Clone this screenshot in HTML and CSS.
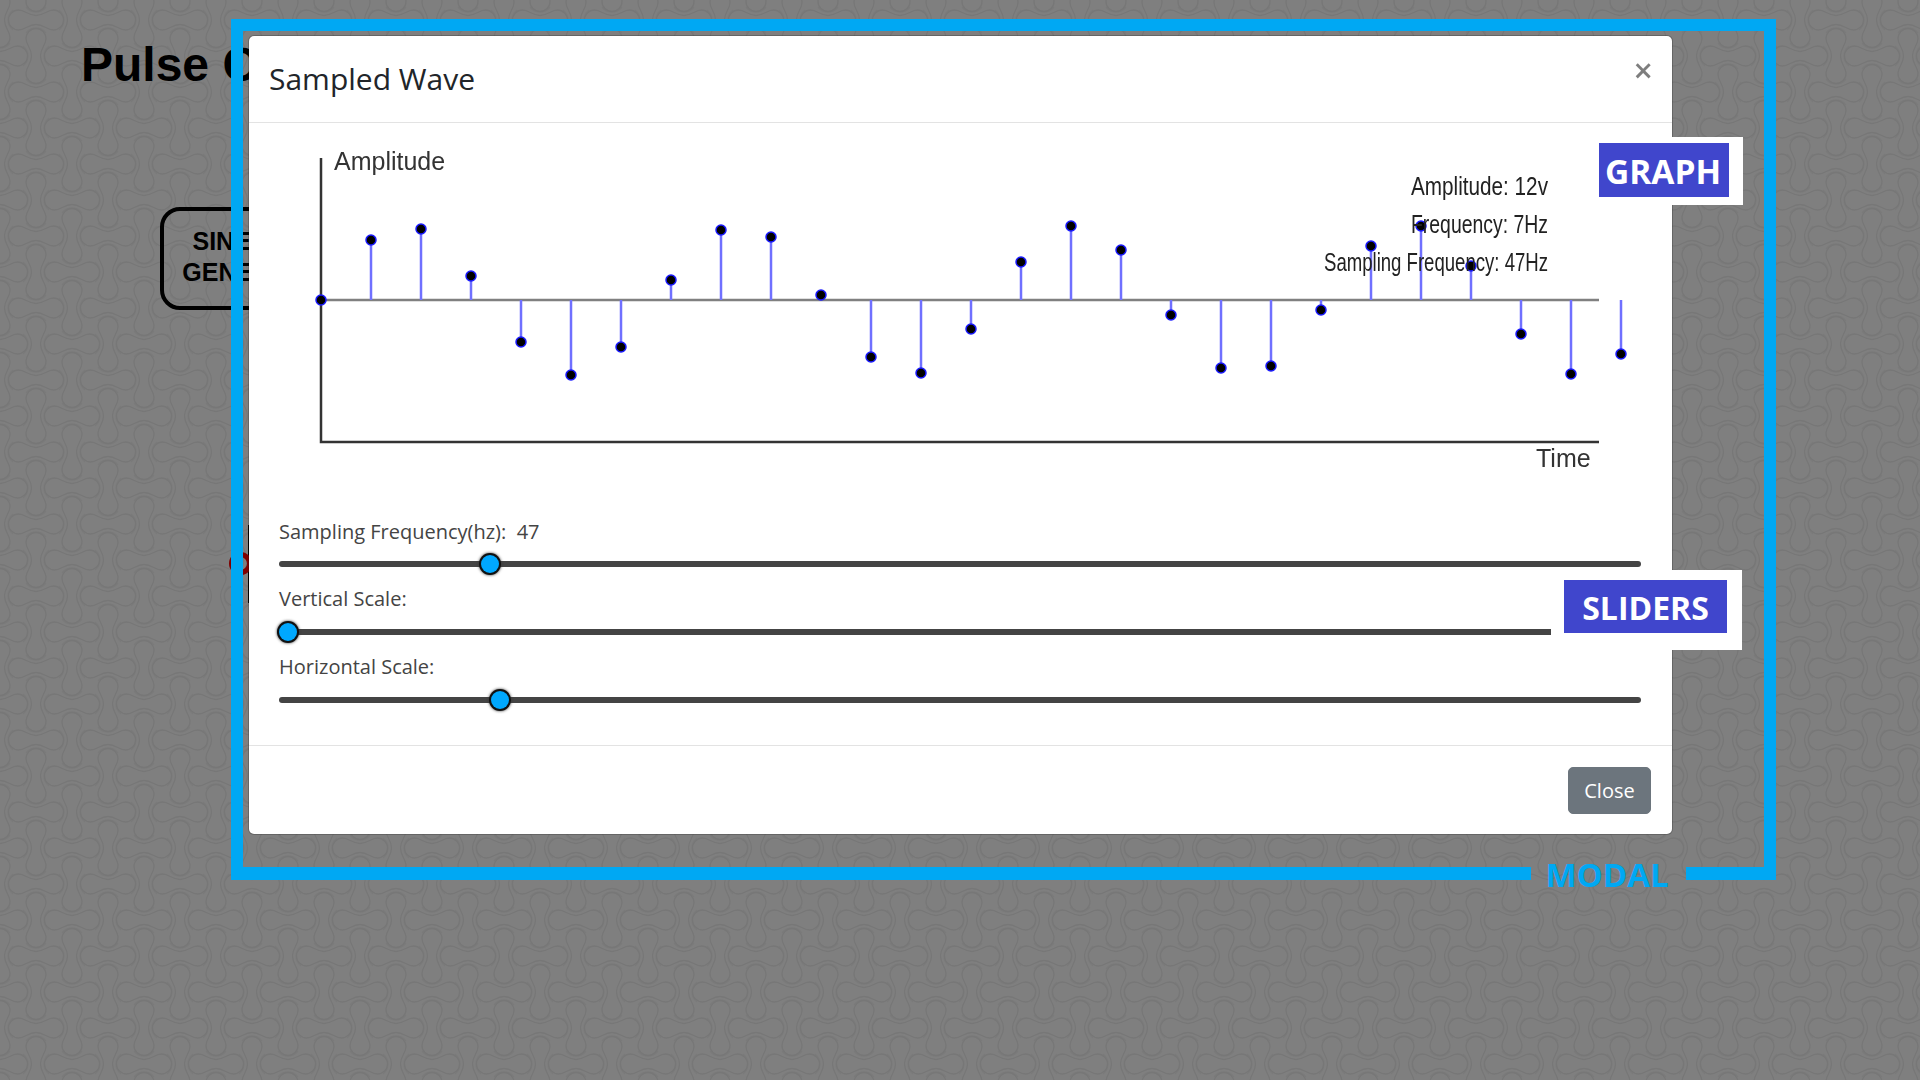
FILE: index.html
```html
<!DOCTYPE html>
<html lang="en">
<head>
    <meta charset="UTF-8"/>
    <title>Sampled Wave</title>
    <link rel="stylesheet" href="styles.css">
</head>
<body>
<svg class="wallpaper" aria-hidden="true">
    <defs>
        <path id="bone" d="M-17.5 -10C-11 -10 -8 -4.5 0 -4.5C8 -4.5 11 -10 17.5 -10A10 10 0 0 1 17.5 10C11 10 8 4.5 0 4.5C-8 4.5 -11 10 -17.5 10A10 10 0 0 1 -17.5 -10Z"/>
        <path id="rim" stroke-opacity="0.6" d="M-10 -13A12.5 12.5 0 0 0 10 -13M-10 13A12.5 12.5 0 0 1 10 13"/>
        <g id="knot">
            <use href="#bone"/>
            <use href="#rim"/>
        </g>
        <pattern id="weave" width="72" height="72" patternUnits="userSpaceOnUse">
            <g fill="none" stroke="#eeeeee" stroke-width="1.3">
                <use href="#knot" transform="translate(0 56)"/>
                <use href="#knot" transform="translate(72 56)"/>
                <use href="#knot" transform="translate(36 20)"/>
                <use href="#knot" transform="translate(36 56) rotate(90)"/>
                <use href="#knot" transform="translate(0 20) rotate(90)"/>
                <use href="#knot" transform="translate(72 20) rotate(90)"/>
                <use href="#knot" transform="translate(36 92)"/>
                <use href="#knot" transform="translate(0 92) rotate(90)"/>
                <use href="#knot" transform="translate(72 92) rotate(90)"/>
                <use href="#knot" transform="translate(0 -16)"/>
                <use href="#knot" transform="translate(72 -16)"/>
                <use href="#knot" transform="translate(36 -16) rotate(90)"/>
            </g>
        </pattern>
    </defs>
    <rect width="100%" height="100%" fill="url(#weave)"/>
</svg>

<main class="page">
    <h1>Pulse Code Modulation</h1>
    <div class="block block-sine">SINE WAVE<br/>GENERATOR</div>
</main>
<div class="block-multiplier"></div>
<div class="mixer"></div>

<div class="backdrop"></div>

<section class="modal">
    <header class="modal-header">
        <h5 class="modal-title">Sampled Wave</h5>
        <button class="close" type="button">&times;</button>
    </header>
    <div class="modal-body">
        <svg class="graph" viewBox="279 140 1363 340">
            <path class="mid" d="M321 300H1599"/>
            <path class="axis" d="M321 158V442H1599"/>
            <path class="stems" d="M371 300V240M421 300V229M471 300V276M521 300V342M571 300V375M621 300V347M671 300V280M721 300V230M771 300V237M821 300V295M871 300V357M921 300V373M971 300V329M1021 300V262M1071 300V226M1121 300V250M1171 300V315M1221 300V368M1271 300V366M1321 300V310M1371 300V246M1421 300V226M1471 300V266M1521 300V334M1571 300V374M1621 300V354"/>
            <g class="dots">
                <circle cx="321" cy="300" r="5"/>
                <circle cx="371" cy="240" r="5"/>
                <circle cx="421" cy="229" r="5"/>
                <circle cx="471" cy="276" r="5"/>
                <circle cx="521" cy="342" r="5"/>
                <circle cx="571" cy="375" r="5"/>
                <circle cx="621" cy="347" r="5"/>
                <circle cx="671" cy="280" r="5"/>
                <circle cx="721" cy="230" r="5"/>
                <circle cx="771" cy="237" r="5"/>
                <circle cx="821" cy="295" r="5"/>
                <circle cx="871" cy="357" r="5"/>
                <circle cx="921" cy="373" r="5"/>
                <circle cx="971" cy="329" r="5"/>
                <circle cx="1021" cy="262" r="5"/>
                <circle cx="1071" cy="226" r="5"/>
                <circle cx="1121" cy="250" r="5"/>
                <circle cx="1171" cy="315" r="5"/>
                <circle cx="1221" cy="368" r="5"/>
                <circle cx="1271" cy="366" r="5"/>
                <circle cx="1321" cy="310" r="5"/>
                <circle cx="1371" cy="246" r="5"/>
                <circle cx="1421" cy="226" r="5"/>
                <circle cx="1471" cy="266" r="5"/>
                <circle cx="1521" cy="334" r="5"/>
                <circle cx="1571" cy="374" r="5"/>
                <circle cx="1621" cy="354" r="5"/>
            </g>
            <text class="axis-label" x="334" y="170">Amplitude</text>
            <text class="axis-label" x="1536" y="467">Time</text>
            <text class="readout" x="1548" y="195" text-anchor="end" textLength="137" lengthAdjust="spacingAndGlyphs">Amplitude: 12v</text>
            <text class="readout" x="1548" y="233" text-anchor="end" textLength="137" lengthAdjust="spacingAndGlyphs">Frequency: 7Hz</text>
            <text class="readout" x="1548" y="271" text-anchor="end" textLength="224" lengthAdjust="spacingAndGlyphs">Sampling Frequency: 47Hz</text>
        </svg>
        <div class="sliders">
            <label class="slider-row">Sampling Frequency(hz):&nbsp; 47
                <input type="range" min="0" max="1000" value="150">
            </label>
            <label class="slider-row">Vertical Scale:
                <input type="range" min="0" max="1000" value="0">
            </label>
            <label class="slider-row">Horizontal Scale:
                <input type="range" min="0" max="1000" value="158">
            </label>
        </div>
    </div>
    <footer class="modal-footer">
        <button class="btn" type="button">Close</button>
    </footer>
</section>

<div class="note note-graph"><span>GRAPH</span></div>
<div class="note note-sliders"><span>SLIDERS</span></div>

<div class="frame">
    <div class="frame-bottom">
        <i></i>
        <span>MODAL</span>
        <i></i>
    </div>
</div>
</body>
</html>
```

FILE: styles.css
```css
html, body {height:100%;}
body {background:#fff;color:#212529;font-family:"Open Sans", sans-serif;margin:0;overflow:hidden;position:relative;}

.wallpaper {height:100%;left:0;position:absolute;top:0;width:100%;}

.page {padding:37px 0 0 81px;position:relative;}
h1 {color:#000;font:bold 48px/56px "Liberation Sans", sans-serif;margin:0;white-space:nowrap;}
.block {align-items:center;border:4px solid #000;border-radius:20px;box-sizing:border-box;color:#000;display:flex;font:bold 25px/31px "Liberation Sans", sans-serif;height:103px;justify-content:center;padding-bottom:4px;text-align:center;width:202px;}
.block-sine {margin:114px 0 0 79px;}
.block-multiplier {border:2px solid #000;height:74px;left:248px;position:absolute;top:525px;width:120px;}
.mixer {border:5px solid #f00;border-radius:50%;height:13px;left:229px;position:absolute;top:552px;width:13px;}

.backdrop {background:rgba(0, 0, 0, 0.5);inset:0;position:absolute;}

.modal {background:#fff;background-clip:padding-box;border:1px solid rgba(0, 0, 0, 0.2);border-radius:6px;box-sizing:border-box;display:flex;flex-direction:column;height:800px;left:248px;position:absolute;top:35px;width:1425px;}
.modal-header {align-items:flex-start;border-bottom:1px solid #e3e3e3;box-sizing:border-box;display:flex;height:87px;justify-content:space-between;padding:0 19px 0 20px;}
.modal-title {font-size:30px;font-weight:400;line-height:45px;margin:20px 0 0;}
.close {background:none;border:0;color:#000;font:600 34px/34px "Open Sans", sans-serif;margin:17px 0 0;opacity:0.5;padding:0;}

.modal-body {flex:1;padding:17px 30px 0;}
.graph {display:block;filter:blur(0.6px);height:340px;width:1363px;}
.mid {fill:none;stroke:#808080;stroke-width:2.5;}
.axis {fill:none;stroke:#333;stroke-width:2.5;}
.stems {fill:none;stroke:#7070ff;stroke-width:2.5;}
.dots circle {fill:#000;stroke:#1a1aff;stroke-width:1.5;}
.axis-label {fill:#333;font:25px "Liberation Sans", sans-serif;}
.readout {fill:#222;font:25px "Liberation Sans", sans-serif;}

.sliders {margin:38px 1px 0 0;}
.slider-row {color:#444;display:block;font-size:20px;height:68px;line-height:28px;}
.slider-row + .slider-row {line-height:26px;}
.slider-row + .slider-row input {margin-top:8px;}
input[type=range] {-webkit-appearance:none;appearance:none;background:transparent;display:block;height:24px;margin:6px 0 0;width:100%;}
input[type=range]::-webkit-slider-runnable-track {background:#444;border-radius:3px;height:6px;}
input[type=range]::-webkit-slider-thumb {-webkit-appearance:none;appearance:none;background:#00a8ff;border-radius:50%;box-shadow:0 0 0 2px #111, 0 0 3px 2px #333;height:18px;margin-top:-6px;width:18px;}

.modal-footer {border-top:1px solid #e3e3e3;box-sizing:border-box;display:flex;height:89px;justify-content:flex-end;padding:21px 21px 0;}
.btn {background:#6c757d;border:1px solid #6c757d;border-radius:5px;color:#fff;font:400 20px/30px "Open Sans", sans-serif;height:47px;padding:0 15px;width:83px;}

.note {background:#fff;box-sizing:border-box;display:flex;position:absolute;}
.note span {background:#4046cc;color:#fff;font-weight:700;text-align:center;}
.note-graph {height:68px;left:1599px;padding-top:6px;top:137px;width:144px;}
.note-graph span {box-sizing:border-box;font-size:33.5px;height:54px;line-height:56px;padding-right:2px;width:130px;}
.note-sliders {height:80px;left:1551px;padding:10px 0 0 13px;top:570px;width:191px;}
.note-sliders span {font-size:32px;height:53px;line-height:55px;width:163px;}

.frame {border:solid #00a8f3;border-width:12px 12px 0;bottom:200px;box-sizing:border-box;display:flex;flex-direction:column;justify-content:flex-end;left:231px;position:absolute;top:19px;width:1545px;}
.frame-bottom {align-items:center;display:flex;height:13px;margin:0 -12px;}
.frame-bottom i {background:#00a8f3;flex:1;height:13px;}
.frame-bottom i:last-child {flex:none;width:90px;}
.frame-bottom span {box-sizing:border-box;color:#00a8f3;font-size:33px;font-weight:700;line-height:13px;padding:2px 3px 0 0;text-align:center;width:155px;}
```
